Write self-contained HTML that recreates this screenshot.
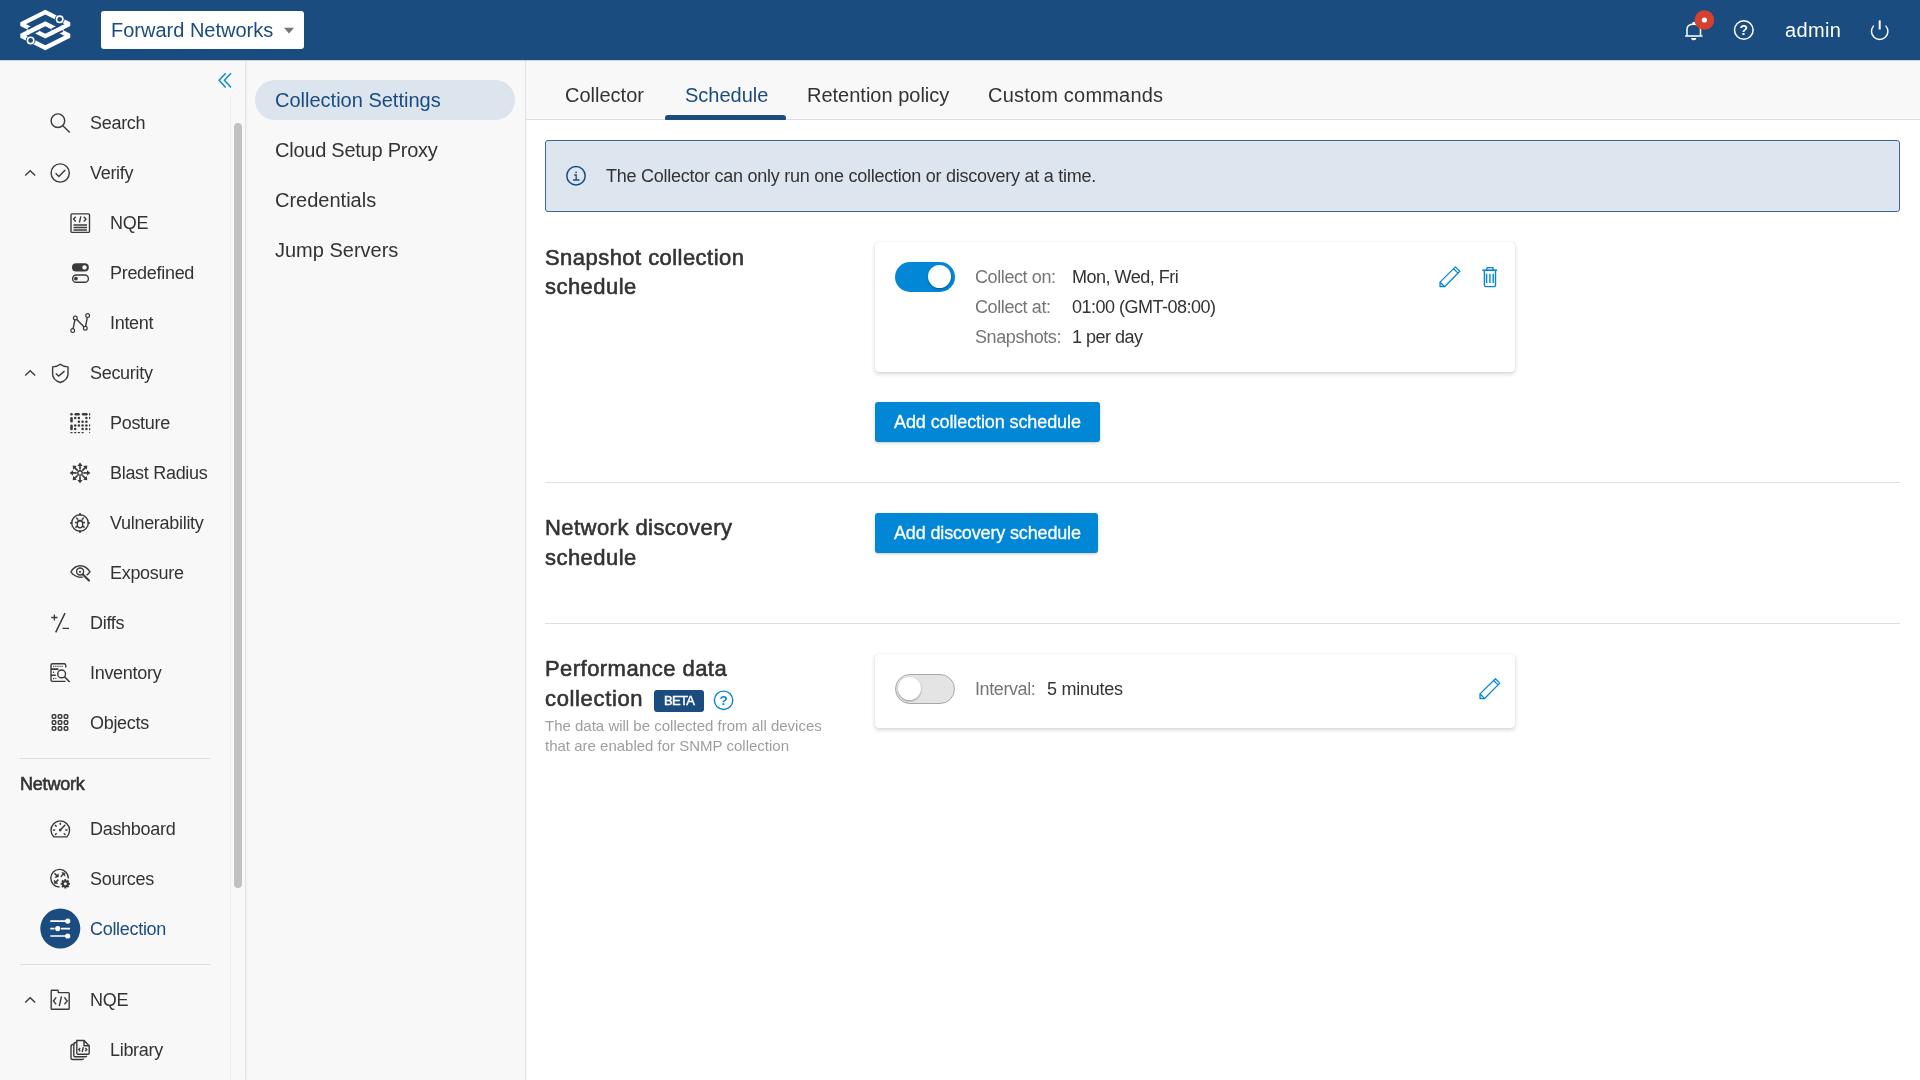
<!DOCTYPE html>
<html><head><meta charset="utf-8">
<style>
*{box-sizing:border-box;margin:0;padding:0}
html,body{width:1920px;height:1080px;overflow:hidden;background:#fff;font-family:"Liberation Sans",sans-serif;color:#333;-webkit-font-smoothing:antialiased}
.abs{position:absolute}
.t{position:absolute;white-space:nowrap;will-change:transform}
.svg{position:absolute;overflow:visible;will-change:transform}
.med{-webkit-text-stroke:0.35px currentColor}
</style></head><body>
<div class="abs" style="left:0;top:0;width:1920px;height:60px;background:#1a4c80"></div>
<svg class="svg" style="left:0;top:0" width="90" height="60" viewBox="0 0 90 60">
<g fill="none" stroke="#fff" stroke-width="4.4" stroke-linejoin="miter" stroke-miterlimit="1.6">
<path d="M45.3 12.1 L69.3 24.1 L45.3 36.1 L21.3 24.1 Z"/>
<path d="M45.3 23.7 L69.3 35.7 L45.3 47.7 L21.3 35.7 Z"/>
</g>
<g stroke-linecap="butt" fill="none"><path d="M29.22 31.74 L37.38 27.66" stroke="#1a4c80" stroke-width="8.2"/><path d="M27.30 32.70 L39.30 26.70" stroke="#fff" stroke-width="4.4"/><path d="M53.22 32.14 L61.38 28.06" stroke="#1a4c80" stroke-width="8.2"/><path d="M51.30 33.10 L63.30 27.10" stroke="#fff" stroke-width="4.4"/></g>
<circle cx="59.7" cy="19.3" r="4.9" fill="#1a4c80"/>
<circle cx="59.7" cy="19.3" r="3.2" fill="#1a4c80" stroke="#fff" stroke-width="1.6"/>
<circle cx="30.6" cy="40.4" r="4.9" fill="#1a4c80"/>
<circle cx="30.6" cy="40.4" r="3.2" fill="#1a4c80" stroke="#fff" stroke-width="1.6"/>
</svg>
<div class="abs" style="left:101px;top:11px;width:203px;height:38px;background:#fff;border-radius:3px"></div>
<div class="t" style="left:111px;top:17.07px;font-size:20px;line-height:26.00px;color:#1a4c80;font-weight:normal;letter-spacing:0px;">Forward Networks</div>
<svg class="svg" style="left:280px;top:24px" width="16" height="12"><path d="M4 3.8 L14 3.8 L9 9.6 Z" fill="#757575"/></svg>
<svg class="svg" style="left:1670px;top:5px" width="50" height="50" viewBox="1670 5 50 50">
<path d="M1685.2 36.1 H1702.5 M1687 36.1 V29.2 C1687 26 1689.8 24.3 1693.75 24.3 C1697.7 24.3 1700.5 26 1700.5 29.2 V36.1" fill="none" stroke="#fff" stroke-width="1.5"/>
<circle cx="1693.75" cy="23.2" r="1.5" fill="#fff"/>
<path d="M1691.2 37.9 A2.6 2.3 0 0 0 1696.4 37.9 Z" fill="#fff"/>
<circle cx="1704.4" cy="20" r="9.8" fill="#d7402f"/>
<circle cx="1704.4" cy="20" r="2.6" fill="#fff"/>
</svg>
<svg class="svg" style="left:1730px;top:16px" width="28" height="28" viewBox="1730 16 28 28">
<circle cx="1743.8" cy="30" r="9.3" fill="none" stroke="#fff" stroke-width="1.5"/>
<text x="1743.8" y="35.3" text-anchor="middle" font-family="Liberation Sans" font-weight="bold" font-size="14" fill="#fff">?</text>
</svg>
<div class="t" style="left:1784.5px;top:17.27px;font-size:20px;line-height:26.00px;color:#fff;font-weight:normal;letter-spacing:0.35px;">admin</div>
<svg class="svg" style="left:1865px;top:15px" width="30" height="30" viewBox="1865 15 30 30">
<path d="M1873.4 26.1 A8.2 8.2 0 1 0 1886.0 26.1" fill="none" stroke="#fff" stroke-width="1.4" stroke-linecap="round"/>
<path d="M1879.7 20.4 L1879.7 29.5" stroke="#fff" stroke-width="2" stroke-linecap="butt"/>
</svg>
<div class="abs" style="left:0;top:60px;width:526px;height:1020px;background:#f8f8f8"></div>
<div class="abs" style="left:0;top:60px;width:1920px;height:1px;background:#c9d3de"></div>
<div class="abs" style="left:230px;top:95px;width:1px;height:985px;background:#ececec"></div>
<div class="abs" style="left:234px;top:123px;width:8px;height:765px;background:#c1c1c1;border-radius:4px"></div>
<div class="abs" style="left:245px;top:61px;width:1px;height:1019px;background:#e2e2e2;box-shadow:1px 0 2px rgba(0,0,0,0.05)"></div>
<div class="abs" style="left:525px;top:61px;width:1px;height:1019px;background:#e0e0e0;box-shadow:1px 0 2px rgba(0,0,0,0.06)"></div>
<svg class="svg" style="left:210px;top:65px" width="30" height="30" viewBox="210 65 30 30"><path d="M225.7 73.2 L219.1 80.3 L225.7 87.4 M231 73.2 L224.4 80.3 L231 87.4" fill="none" stroke="#0286d6" stroke-width="1.4"/></svg>
<svg class="svg" style="left:45px;top:107px" width="30" height="30" viewBox="45 107 30 30"><circle cx="57.9" cy="120.7" r="6.8" fill="none" stroke="#3a3a3a" stroke-width="1.4"/><path d="M62.8 125.7 L69.8 132.4" fill="none" stroke="#3a3a3a" stroke-width="1.4" stroke-width="1.5"/></svg>
<div class="t" style="left:90px;top:111.96px;font-size:18px;line-height:23.40px;color:#333;font-weight:normal;letter-spacing:-0.3px;">Search</div>
<svg class="svg" style="left:20px;top:162px" width="20" height="20" viewBox="20 162 20 20"><path d="M25.2 175.6 L30.2 170.8 L35.2 175.6" fill="none" stroke="#3a3a3a" stroke-width="1.4"/></svg>
<svg class="svg" style="left:45px;top:158px" width="30" height="30" viewBox="45 158 30 30"><circle cx="60.2" cy="173" r="9.1" fill="none" stroke="#3a3a3a" stroke-width="1.4" stroke-width="1.5"/><path d="M55.6 173.2 L58.9 176.4 L65.2 170.1" fill="none" stroke="#3a3a3a" stroke-width="1.4" stroke-width="1.5"/></svg>
<div class="t" style="left:90px;top:161.96px;font-size:18px;line-height:23.40px;color:#333;font-weight:normal;letter-spacing:-0.3px;">Verify</div>
<svg class="svg" style="left:65px;top:207px" width="30" height="30" viewBox="65 207 30 30"><rect x="71" y="213.9" width="18.5" height="18.5" rx="1.2" fill="none" stroke="#3a3a3a" stroke-width="1.4" stroke-width="1.5"/><path d="M75.8 216.7 L73.6 219.1 L75.8 221.5 M79.4 222.6 L80.8 216.4 M83.8 216.7 L86 219.1 L83.8 221.5" fill="none" stroke="#3a3a3a" stroke-width="1.4" stroke-width="1.3"/><path d="M73.5 225 H87 M73.5 227.5 H87 M73.5 230 H87" fill="none" stroke="#3a3a3a" stroke-width="1.4" stroke-width="1.3"/></svg>
<div class="t" style="left:110px;top:211.96px;font-size:18px;line-height:23.40px;color:#333;font-weight:normal;letter-spacing:-0.3px;">NQE</div>
<svg class="svg" style="left:65px;top:257px" width="30" height="30" viewBox="65 257 30 30"><rect x="72" y="263.3" width="16.8" height="8.2" rx="4.1" fill="#3a3a3a"/><circle cx="84.5" cy="267.4" r="2.2" fill="#f8f8f8"/><rect x="72.6" y="275" width="15.8" height="7.3" rx="3.65" fill="none" stroke="#3a3a3a" stroke-width="1.4" stroke-width="1.3"/><circle cx="75.9" cy="278.6" r="1.9" fill="#3a3a3a"/></svg>
<div class="t" style="left:110px;top:261.96px;font-size:18px;line-height:23.40px;color:#333;font-weight:normal;letter-spacing:-0.3px;">Predefined</div>
<svg class="svg" style="left:65px;top:307px" width="30" height="30" viewBox="65 307 30 30"><path d="M72.7 330.6 L75.3 318 L85.3 328.2 L87.6 315.6" fill="none" stroke="#3a3a3a" stroke-width="1.4" stroke-width="1.3"/><circle cx="72.7" cy="330.6" r="1.9" fill="#f8f8f8" stroke="#3a3a3a" stroke-width="1.2"/><circle cx="75.3" cy="318" r="1.9" fill="#f8f8f8" stroke="#3a3a3a" stroke-width="1.2"/><circle cx="85.3" cy="328.2" r="1.9" fill="#f8f8f8" stroke="#3a3a3a" stroke-width="1.2"/><circle cx="87.6" cy="315.6" r="1.9" fill="#f8f8f8" stroke="#3a3a3a" stroke-width="1.2"/></svg>
<div class="t" style="left:110px;top:311.96px;font-size:18px;line-height:23.40px;color:#333;font-weight:normal;letter-spacing:-0.3px;">Intent</div>
<svg class="svg" style="left:20px;top:362px" width="20" height="20" viewBox="20 362 20 20"><path d="M25.2 375.6 L30.2 370.8 L35.2 375.6" fill="none" stroke="#3a3a3a" stroke-width="1.4"/></svg>
<svg class="svg" style="left:45px;top:357px" width="30" height="30" viewBox="45 357 30 30"><path d="M60.3 364.2 C58.2 366 55.8 366.8 52.6 366.9 L52.6 374 C52.6 378 56 381 60.3 382.5 C64.6 381 68 378 68 374 L68 366.9 C64.8 366.8 62.4 366 60.3 364.2 Z" fill="none" stroke="#3a3a3a" stroke-width="1.4" stroke-width="1.4" stroke-linejoin="round"/><path d="M55.8 373.4 L58.7 376.1 L64.5 371.1" fill="none" stroke="#3a3a3a" stroke-width="1.4" stroke-width="1.4"/></svg>
<div class="t" style="left:90px;top:361.96px;font-size:18px;line-height:23.40px;color:#333;font-weight:normal;letter-spacing:-0.3px;">Security</div>
<svg class="svg" style="left:65px;top:407px" width="30" height="30" viewBox="65 407 30 30"><g fill="#3a3a3a"><circle cx="71.5" cy="414.2" r="1.3"/><rect x="74.4" y="412.9" width="5.5" height="2.6" rx="1.3"/><rect x="81.8" y="412.9" width="5.9" height="2.6" rx="1.3"/><rect x="89" y="412.9" width="1.2" height="2.6" rx="0.6"/><rect x="70.2" y="417.1" width="2.6" height="5.5" rx="1.3"/><rect x="70.2" y="424.4" width="2.6" height="5.8" rx="1.3"/><circle cx="75.2" cy="417.9" r="1.25"/><circle cx="78.9" cy="417.9" r="1.25"/><circle cx="86.4" cy="417.9" r="1.25"/><circle cx="78.9" cy="421.7" r="1.25"/><circle cx="82.6" cy="421.7" r="1.25"/><circle cx="86.4" cy="421.7" r="1.25"/><circle cx="75.2" cy="425.4" r="1.25"/><circle cx="78.9" cy="425.4" r="1.25"/><circle cx="82.6" cy="425.4" r="1.25"/><circle cx="86.4" cy="425.4" r="1.25"/><circle cx="75.2" cy="429.1" r="1.25"/><circle cx="82.6" cy="429.1" r="1.25"/><circle cx="86.4" cy="429.1" r="1.25"/><rect x="89" y="416.7" width="1.2" height="2.4" rx="0.6"/><rect x="89" y="424.2" width="1.2" height="2.4" rx="0.6"/><rect x="89" y="427.90000000000003" width="1.2" height="2.4" rx="0.6"/><rect x="70.3" y="431.9" width="2.4" height="1.3" rx="0.6"/><rect x="74.0" y="431.9" width="2.4" height="1.3" rx="0.6"/><rect x="77.7" y="431.9" width="2.4" height="1.3" rx="0.6"/><rect x="81.39999999999999" y="431.9" width="2.4" height="1.3" rx="0.6"/><rect x="89" y="431.9" width="1.2" height="1.3" rx="0.6"/></g></svg>
<div class="t" style="left:110px;top:411.96px;font-size:18px;line-height:23.40px;color:#333;font-weight:normal;letter-spacing:-0.3px;">Posture</div>
<svg class="svg" style="left:65px;top:457px" width="30" height="30" viewBox="65 457 30 30"><circle cx="80" cy="472.9" r="2.2" fill="none" stroke="#3a3a3a" stroke-width="1.4" stroke-width="1.5"/><path d="M83.30 472.90 L89.20 472.90" stroke="#3a3a3a" stroke-width="1.7"/><path d="M90.30 472.90 L87.00 475.50 L87.00 470.30 Z" fill="#3a3a3a"/><path d="M82.33 475.23 L86.51 479.41" stroke="#3a3a3a" stroke-width="1.7"/><path d="M87.28 480.18 L83.11 479.69 L86.79 476.01 Z" fill="#3a3a3a"/><path d="M80.00 476.20 L80.00 482.10" stroke="#3a3a3a" stroke-width="1.7"/><path d="M80.00 483.20 L77.40 479.90 L82.60 479.90 Z" fill="#3a3a3a"/><path d="M77.67 475.23 L73.49 479.41" stroke="#3a3a3a" stroke-width="1.7"/><path d="M72.72 480.18 L73.21 476.01 L76.89 479.69 Z" fill="#3a3a3a"/><path d="M76.70 472.90 L70.80 472.90" stroke="#3a3a3a" stroke-width="1.7"/><path d="M69.70 472.90 L73.00 470.30 L73.00 475.50 Z" fill="#3a3a3a"/><path d="M77.67 470.57 L73.49 466.39" stroke="#3a3a3a" stroke-width="1.7"/><path d="M72.72 465.62 L76.89 466.11 L73.21 469.79 Z" fill="#3a3a3a"/><path d="M80.00 469.60 L80.00 463.70" stroke="#3a3a3a" stroke-width="1.7"/><path d="M80.00 462.60 L82.60 465.90 L77.40 465.90 Z" fill="#3a3a3a"/><path d="M82.33 470.57 L86.51 466.39" stroke="#3a3a3a" stroke-width="1.7"/><path d="M87.28 465.62 L86.79 469.79 L83.11 466.11 Z" fill="#3a3a3a"/></svg>
<div class="t" style="left:110px;top:461.96px;font-size:18px;line-height:23.40px;color:#333;font-weight:normal;letter-spacing:-0.3px;">Blast Radius</div>
<svg class="svg" style="left:65px;top:507px" width="30" height="30" viewBox="65 507 30 30"><circle cx="80" cy="523" r="8.3" fill="none" stroke="#3a3a3a" stroke-width="1.4" stroke-width="1.4"/><path d="M80 513 V515.5 M80 530.5 V533 M70 523 H72.5 M87.5 523 H90" stroke="#3a3a3a" stroke-width="1.6"/><ellipse cx="80" cy="524.3" rx="2.7" ry="3.5" fill="none" stroke="#3a3a3a" stroke-width="1.4" stroke-width="1.6"/><path d="M78 519.5 L76.2 517.8 M82 519.5 L83.8 517.8 M77.3 522.5 H75 M82.7 522.5 H85 M77.5 525.8 L75.5 527.6 M82.5 525.8 L84.5 527.6 M77.5 520.5 H82.5" stroke="#3a3a3a" stroke-width="1.5"/></svg>
<div class="t" style="left:110px;top:511.96px;font-size:18px;line-height:23.40px;color:#333;font-weight:normal;letter-spacing:-0.3px;">Vulnerability</div>
<svg class="svg" style="left:65px;top:557px" width="30" height="30" viewBox="65 557 30 30"><path d="M70.8 571.8 C73.5 567.6 76.8 565.7 80.3 565.7 C83.8 565.7 87.2 567.6 90 571.8 C89 573.2 87.9 574.3 86.6 575.2 M70.8 571.8 C73.5 575.5 77.5 577.4 82.6 577.3" fill="none" stroke="#3a3a3a" stroke-width="1.4" stroke-width="1.4"/><circle cx="80.1" cy="571.5" r="3.5" fill="#f8f8f8" stroke="#3a3a3a" stroke-width="1.4"/><circle cx="80" cy="571.8" r="1.1" fill="#3a3a3a"/><path d="M82.6 574.2 L89 580.4" stroke="#3a3a3a" stroke-width="2.1" stroke-linecap="round"/></svg>
<div class="t" style="left:110px;top:561.96px;font-size:18px;line-height:23.40px;color:#333;font-weight:normal;letter-spacing:-0.3px;">Exposure</div>
<svg class="svg" style="left:45px;top:607px" width="30" height="30" viewBox="45 607 30 30"><path d="M51.3 617.5 H57.5 M54.4 614.4 V620.6" stroke="#3a3a3a" stroke-width="1.3"/><path d="M65 613.2 L55.7 632.4" stroke="#3a3a3a" stroke-width="1.5"/><path d="M62.5 628.4 H69" stroke="#3a3a3a" stroke-width="1.3"/></svg>
<div class="t" style="left:90px;top:611.96px;font-size:18px;line-height:23.40px;color:#333;font-weight:normal;letter-spacing:-0.3px;">Diffs</div>
<svg class="svg" style="left:45px;top:657px" width="30" height="30" viewBox="45 657 30 30"><path d="M51 669 V665.3 Q51 663.8 52.5 663.8 H64.2 Q65.7 663.8 65.7 665.3 V667.4" fill="none" stroke="#3a3a3a" stroke-width="1.4" stroke-width="1.4"/><path d="M51 668.9 V680 Q51 681.4 52.4 681.4 H65.5" fill="none" stroke="#3a3a3a" stroke-width="1.4" stroke-width="1.4"/><path d="M51 669.1 H58.5 M51 675.2 H55.8" stroke="#3a3a3a" stroke-width="1.6"/><path d="M53.2 666.4 H63.6" stroke="#3a3a3a" stroke-width="1.1" stroke-dasharray="1.1 1.0"/><circle cx="53.6" cy="672.3" r="0.75" fill="#3a3a3a"/><circle cx="53.6" cy="678.4" r="0.75" fill="#3a3a3a"/><circle cx="55.8" cy="678.4" r="0.6" fill="#3a3a3a"/><circle cx="61.6" cy="673.9" r="3.9" fill="none" stroke="#3a3a3a" stroke-width="1.4"/><path d="M64.6 676.9 L69.7 682" stroke="#3a3a3a" stroke-width="1.5"/></svg>
<div class="t" style="left:90px;top:661.96px;font-size:18px;line-height:23.40px;color:#333;font-weight:normal;letter-spacing:-0.3px;">Inventory</div>
<svg class="svg" style="left:45px;top:707px" width="30" height="30" viewBox="45 707 30 30"><rect x="52.2" y="714.7" width="3.6" height="3.6" rx="1" fill="none" stroke="#3a3a3a" stroke-width="1.4" stroke-width="1.3"/><rect x="52.2" y="720.7" width="3.6" height="3.6" rx="1" fill="none" stroke="#3a3a3a" stroke-width="1.4" stroke-width="1.3"/><rect x="52.2" y="726.7" width="3.6" height="3.6" rx="1" fill="none" stroke="#3a3a3a" stroke-width="1.4" stroke-width="1.3"/><rect x="58.2" y="714.7" width="3.6" height="3.6" rx="1" fill="none" stroke="#3a3a3a" stroke-width="1.4" stroke-width="1.3"/><rect x="58.2" y="720.7" width="3.6" height="3.6" rx="1" fill="none" stroke="#3a3a3a" stroke-width="1.4" stroke-width="1.3"/><rect x="58.2" y="726.7" width="3.6" height="3.6" rx="1" fill="none" stroke="#3a3a3a" stroke-width="1.4" stroke-width="1.3"/><rect x="64.2" y="714.7" width="3.6" height="3.6" rx="1" fill="none" stroke="#3a3a3a" stroke-width="1.4" stroke-width="1.3"/><rect x="64.2" y="720.7" width="3.6" height="3.6" rx="1" fill="none" stroke="#3a3a3a" stroke-width="1.4" stroke-width="1.3"/><rect x="64.2" y="726.7" width="3.6" height="3.6" rx="1" fill="none" stroke="#3a3a3a" stroke-width="1.4" stroke-width="1.3"/></svg>
<div class="t" style="left:90px;top:711.96px;font-size:18px;line-height:23.40px;color:#333;font-weight:normal;letter-spacing:-0.3px;">Objects</div>
<div class="abs" style="left:20px;top:758px;width:190px;height:1px;background:#dedede"></div>
<div class="t" style="left:20px;top:773.06px;font-size:18px;line-height:23.40px;color:#333;font-weight:normal;letter-spacing:-0.2px;-webkit-text-stroke:0.6px #333">Network</div>
<svg class="svg" style="left:45px;top:813px" width="30" height="30" viewBox="45 813 30 30"><path d="M53.85 836.9 A9.3 9.3 0 1 1 66.75 836.9 Z" fill="none" stroke="#3a3a3a" stroke-width="1.4" stroke-width="1.4" stroke-linejoin="round"/><path d="M60.2 830.1 L64.9 825.3" stroke="#3a3a3a" stroke-width="1.5" stroke-linecap="round"/><circle cx="60.2" cy="830.1" r="1.3" fill="#3a3a3a"/><path d="M60.29 824.35 L60.31 823.25" stroke="#3a3a3a" stroke-width="1.5" stroke-linecap="round"/><path d="M56.19 826.18 L55.41 825.42" stroke="#3a3a3a" stroke-width="1.5" stroke-linecap="round"/><path d="M54.55 830.10 L53.45 830.10" stroke="#3a3a3a" stroke-width="1.5" stroke-linecap="round"/><path d="M65.85 830.10 L66.95 830.10" stroke="#3a3a3a" stroke-width="1.5" stroke-linecap="round"/><path d="M56.21 833.73 L55.39 834.47" stroke="#3a3a3a" stroke-width="1.5" stroke-linecap="round"/><path d="M64.19 833.73 L65.01 834.47" stroke="#3a3a3a" stroke-width="1.5" stroke-linecap="round"/></svg>
<div class="t" style="left:90px;top:817.96px;font-size:18px;line-height:23.40px;color:#333;font-weight:normal;letter-spacing:-0.3px;">Dashboard</div>
<svg class="svg" style="left:45px;top:863px" width="30" height="30" viewBox="45 863 30 30"><path d="M68.4 878.5 A8.8 8.8 0 1 0 59.6 887" fill="none" stroke="#3a3a3a" stroke-width="1.4" stroke-width="1.5"/><path d="M54.4 873.3 L57.4 876.2 M60.8 876.8 L63.8 873.6 M58.4 879.6 L55.2 882.8" stroke="#3a3a3a" stroke-width="1.5" fill="none"/><path d="M58.4 876.9 L55 877.5 L58.2 873.8 Z M64.8 873 L64.9 876.2 L61.8 872.6 Z M54.4 883.6 L54.2 880 L57.8 883.4 Z" fill="#3a3a3a" stroke="#3a3a3a" stroke-width="0.6" stroke-linejoin="round"/><path d="M67.80 883.80 L70.00 883.80" stroke="#3a3a3a" stroke-width="1.9"/><path d="M67.07 885.57 L68.62 887.12" stroke="#3a3a3a" stroke-width="1.9"/><path d="M65.30 886.30 L65.30 888.50" stroke="#3a3a3a" stroke-width="1.9"/><path d="M63.53 885.57 L61.98 887.12" stroke="#3a3a3a" stroke-width="1.9"/><path d="M62.80 883.80 L60.60 883.80" stroke="#3a3a3a" stroke-width="1.9"/><path d="M63.53 882.03 L61.98 880.48" stroke="#3a3a3a" stroke-width="1.9"/><path d="M65.30 881.30 L65.30 879.10" stroke="#3a3a3a" stroke-width="1.9"/><path d="M67.07 882.03 L68.62 880.48" stroke="#3a3a3a" stroke-width="1.9"/><circle cx="65.3" cy="883.8" r="3.6" fill="#3a3a3a"/><circle cx="65.3" cy="883.8" r="1.5" fill="#f8f8f8"/></svg>
<div class="t" style="left:90px;top:867.96px;font-size:18px;line-height:23.40px;color:#333;font-weight:normal;letter-spacing:-0.3px;">Sources</div>
<svg class="svg" style="left:38px;top:906px" width="46" height="46" viewBox="38 906 46 46"><circle cx="60.3" cy="928.6" r="20" fill="#1a4c80"/><path d="M50.3 921.1 H67 M50.3 928.6 H54.5 M61 928.6 H70 M50.3 936 H67" stroke="#fff" stroke-width="1.6"/><circle cx="67.7" cy="921.1" r="2.6" fill="#fff"/><circle cx="57.7" cy="928.6" r="2.6" fill="#fff"/><circle cx="67.7" cy="936" r="2.6" fill="#fff"/></svg>
<div class="t" style="left:90px;top:917.96px;font-size:18px;line-height:23.40px;color:#1a4c80;font-weight:normal;letter-spacing:-0.3px;">Collection</div>
<div class="abs" style="left:20px;top:964px;width:190px;height:1px;background:#dedede"></div>
<svg class="svg" style="left:20px;top:989px" width="20" height="20" viewBox="20 989 20 20"><path d="M25.2 1002.6 L30.2 997.8 L35.2 1002.6" fill="none" stroke="#3a3a3a" stroke-width="1.4"/></svg>
<svg class="svg" style="left:45px;top:985px" width="30" height="30" viewBox="45 985 30 30"><path d="M51.2 1008.5 V991 Q51.2 990.3 52 990.3 H57.5 Q58.3 990.3 58.3 991.2 V992.6 H68.4 Q69.2 992.6 69.2 993.4 V1008.5 Q69.2 1009.3 68.4 1009.3 H52 Q51.2 1009.3 51.2 1008.5 Z" fill="none" stroke="#3a3a3a" stroke-width="1.4" stroke-width="1.4"/><path d="M56.2 997.4 L53.4 1001 L56.2 1004.4 M64.4 997.4 L67.2 1001 L64.4 1004.4 M61.5 996.4 L59.3 1006" fill="none" stroke="#3a3a3a" stroke-width="1.4" stroke-width="1.4"/></svg>
<div class="t" style="left:90px;top:988.96px;font-size:18px;line-height:23.40px;color:#333;font-weight:normal;letter-spacing:-0.3px;">NQE</div>
<svg class="svg" style="left:65px;top:1035px" width="30" height="30" viewBox="65 1035 30 30"><path d="M73.8 1044.2 Q71 1044.2 71 1046.8 V1058 Q71 1059.5 72.5 1059.5 H82 Q83.2 1059.5 83.8 1058.5" fill="none" stroke="#3a3a3a" stroke-width="1.4" stroke-width="1.3"/><path d="M76.8 1042.2 Q73.8 1042.2 73.8 1044.9 V1055.5 Q73.8 1056.8 75 1056.8 H85 Q86.2 1056.8 86.8 1055.8" fill="none" stroke="#3a3a3a" stroke-width="1.4" stroke-width="1.3"/><path d="M76.8 1040.5 H84 L89.2 1045.8 V1053 Q89.2 1054.3 88 1054.3 H78 Q76.8 1054.3 76.8 1053 Z M84 1040.5 V1045.8 H89.2" fill="none" stroke="#3a3a3a" stroke-width="1.4" stroke-width="1.3"/><path d="M80.2 1048 L78.8 1049.6 L80.2 1051.2 M85.4 1048 L86.8 1049.6 L85.4 1051.2 M83.3 1047.2 L82.2 1052" fill="none" stroke="#3a3a3a" stroke-width="1.4" stroke-width="1"/></svg>
<div class="t" style="left:110px;top:1038.96px;font-size:18px;line-height:23.40px;color:#333;font-weight:normal;letter-spacing:-0.3px;">Library</div>
<div class="abs" style="left:255px;top:80px;width:260px;height:40px;background:#dce4ee;border-radius:20px"></div>
<div class="t" style="left:275px;top:86.57px;font-size:20px;line-height:26.00px;color:#1a4c80;font-weight:normal;letter-spacing:0px;">Collection Settings</div>
<div class="t" style="left:275px;top:136.57px;font-size:20px;line-height:26.00px;color:#333;font-weight:normal;letter-spacing:-0.25px;">Cloud Setup Proxy</div>
<div class="t" style="left:275px;top:186.57px;font-size:20px;line-height:26.00px;color:#333;font-weight:normal;letter-spacing:0px;">Credentials</div>
<div class="t" style="left:275px;top:236.57px;font-size:20px;line-height:26.00px;color:#333;font-weight:normal;letter-spacing:0px;">Jump Servers</div>
<div class="abs" style="left:526px;top:61px;width:1394px;height:59px;background:#f8f8f8;border-bottom:1px solid #dcdcdc"></div>
<div class="t" style="left:565px;top:81.67px;font-size:20px;line-height:26.00px;color:#333;font-weight:normal;letter-spacing:0px;">Collector</div>
<div class="t" style="left:685px;top:81.67px;font-size:20px;line-height:26.00px;color:#1a4c80;font-weight:normal;letter-spacing:0px;">Schedule</div>
<div class="t" style="left:807px;top:81.67px;font-size:20px;line-height:26.00px;color:#333;font-weight:normal;letter-spacing:0px;">Retention policy</div>
<div class="t" style="left:988px;top:81.67px;font-size:20px;line-height:26.00px;color:#333;font-weight:normal;letter-spacing:0.2px;">Custom commands</div>
<div class="abs" style="left:665px;top:115px;width:121px;height:5px;background:#1a4c80;border-radius:3px 3px 1px 1px"></div>
<div class="abs" style="left:545px;top:140px;width:1355px;height:72px;background:#dde5ef;border:1px solid #3a6699;border-radius:3px"></div>
<svg class="svg" style="left:560px;top:160px" width="32" height="32" viewBox="560 160 32 32"><circle cx="576" cy="175.8" r="9.2" fill="none" stroke="#1a4c80" stroke-width="1.5"/><circle cx="576.1" cy="172.3" r="0.9" fill="#1a4c80"/><path d="M574.2 175 H576.2 V179.5 M573 180 H579.5" fill="none" stroke="#1a4c80" stroke-width="1.3"/></svg>
<div class="t" style="left:606px;top:164.76px;font-size:18px;line-height:23.40px;color:#333;font-weight:normal;letter-spacing:-0.25px;">The Collector can only run one collection or discovery at a time.</div>
<div class="t" style="left:545px;top:243.68px;font-size:22px;line-height:28.60px;color:#333;font-weight:normal;letter-spacing:0.45px;-webkit-text-stroke:0.6px #333">Snapshot collection</div>
<div class="t" style="left:545px;top:273.48px;font-size:22px;line-height:28.60px;color:#333;font-weight:normal;letter-spacing:0.45px;-webkit-text-stroke:0.6px #333">schedule</div>
<div class="abs" style="left:875px;top:242px;width:640px;height:130px;background:#fff;border-radius:4px;box-shadow:0 2px 4px rgba(0,0,0,0.16),0 0 1px rgba(0,0,0,0.16)"></div>
<div class="abs" style="left:895px;top:262px;width:60px;height:30px;background:#0286d6;border-radius:15px"></div>
<div class="abs" style="left:928px;top:265px;width:23.4px;height:23.4px;background:#fff;border-radius:50%;box-shadow:0 1px 2px rgba(0,0,0,0.35)"></div>
<div class="t" style="left:975px;top:265.86px;font-size:18px;line-height:23.40px;color:#757575;font-weight:normal;letter-spacing:-0.4px;">Collect on:</div>
<div class="t" style="left:1072px;top:265.86px;font-size:18px;line-height:23.40px;color:#333;font-weight:normal;letter-spacing:-0.5px;">Mon, Wed, Fri</div>
<div class="t" style="left:975px;top:295.86px;font-size:18px;line-height:23.40px;color:#757575;font-weight:normal;letter-spacing:-0.4px;">Collect at:</div>
<div class="t" style="left:1072px;top:295.86px;font-size:18px;line-height:23.40px;color:#333;font-weight:normal;letter-spacing:-0.5px;">01:00 (GMT-08:00)</div>
<div class="t" style="left:975px;top:325.86px;font-size:18px;line-height:23.40px;color:#757575;font-weight:normal;letter-spacing:-0.4px;">Snapshots:</div>
<div class="t" style="left:1072px;top:325.86px;font-size:18px;line-height:23.40px;color:#333;font-weight:normal;letter-spacing:-0.5px;">1 per day</div>
<svg class="svg" style="left:1430px;top:260px" width="40" height="40" viewBox="1430 260 40 40"><path d="M1440 286.7 L1440 282.09999999999997 L1455.4 266.9 L1459.8 271.3 L1444.6 286.7 Z M1440.4 282.5 L1444.2 286.3 M1453.6 268.7 L1458 273.09999999999997" fill="none" stroke="#0286d6" stroke-width="1.25" stroke-linejoin="round"/><path d="M1440.2 286.5 L1440.2 283.5 L1443.2 286.5 Z" fill="#0286d6" opacity="0.35"/></svg>
<svg class="svg" style="left:1475px;top:260px" width="30" height="32" viewBox="1475 260 30 32"><path d="M1482.3 270.2 H1497" stroke="#0286d6" stroke-width="1.6"/><path d="M1486.5 270 L1487.3 267.6 H1492.7 L1493.5 270" fill="none" stroke="#0286d6" stroke-width="1.4"/><path d="M1484.4 270.5 V285.3 Q1484.4 286.6 1485.7 286.6 H1494.2 Q1495.5 286.6 1495.5 285.3 V270.5" fill="none" stroke="#0286d6" stroke-width="1.4"/><path d="M1486.6 273.8 V283 M1489.9 273.8 V283 M1493.2 273.8 V283" stroke="#0286d6" stroke-width="1.4"/></svg>
<div class="abs" style="left:875px;top:402px;width:225px;height:40px;background:#0286d6;border-radius:3px;box-shadow:0 1px 3px rgba(0,0,0,0.22)"></div>
<div class="t" style="left:894px;top:410.56px;font-size:18px;line-height:23.40px;color:#fff;font-weight:normal;letter-spacing:-0.1px;-webkit-text-stroke:0.3px #fff">Add collection schedule</div>
<div class="abs" style="left:545px;top:482px;width:1355px;height:1px;background:#e0e0e0"></div>
<div class="t" style="left:545px;top:514.08px;font-size:22px;line-height:28.60px;color:#333;font-weight:normal;letter-spacing:0.45px;-webkit-text-stroke:0.6px #333">Network discovery</div>
<div class="t" style="left:545px;top:544.08px;font-size:22px;line-height:28.60px;color:#333;font-weight:normal;letter-spacing:0.45px;-webkit-text-stroke:0.6px #333">schedule</div>
<div class="abs" style="left:875px;top:513px;width:223px;height:40px;background:#0286d6;border-radius:3px;box-shadow:0 1px 3px rgba(0,0,0,0.22)"></div>
<div class="t" style="left:894px;top:521.56px;font-size:18px;line-height:23.40px;color:#fff;font-weight:normal;letter-spacing:-0.15px;-webkit-text-stroke:0.3px #fff">Add discovery schedule</div>
<div class="abs" style="left:545px;top:623px;width:1355px;height:1px;background:#e0e0e0"></div>
<div class="t" style="left:545px;top:654.88px;font-size:22px;line-height:28.60px;color:#333;font-weight:normal;letter-spacing:0.45px;-webkit-text-stroke:0.6px #333">Performance data</div>
<div class="t" style="left:545px;top:684.58px;font-size:22px;line-height:28.60px;color:#333;font-weight:normal;letter-spacing:0.65px;-webkit-text-stroke:0.6px #333">collection</div>
<div class="abs" style="left:654px;top:689.5px;width:49.5px;height:22px;background:#1a4c80;border-radius:3px"></div>
<div class="t" style="left:664px;top:693.35px;font-size:13px;line-height:16.90px;color:#fff;font-weight:normal;letter-spacing:-0.7px;-webkit-text-stroke:0.45px #fff">BETA</div>
<svg class="svg" style="left:710px;top:687px" width="28" height="28" viewBox="710 687 28 28"><circle cx="723.6" cy="700.3" r="9.2" fill="none" stroke="#0286d6" stroke-width="1.4"/><text x="723.6" y="705.2" text-anchor="middle" font-family="Liberation Sans" font-weight="bold" font-size="13.5" fill="#0286d6">?</text></svg>
<div class="t" style="left:545px;top:716.05px;font-size:15px;line-height:19.50px;color:#9e9e9e;font-weight:normal;letter-spacing:0px;">The data will be collected from all devices</div>
<div class="t" style="left:545px;top:736.05px;font-size:15px;line-height:19.50px;color:#9e9e9e;font-weight:normal;letter-spacing:0px;">that are enabled for SNMP collection</div>
<div class="abs" style="left:875px;top:654px;width:640px;height:74px;background:#fff;border-radius:4px;box-shadow:0 2px 4px rgba(0,0,0,0.16),0 0 1px rgba(0,0,0,0.16)"></div>
<div class="abs" style="left:895px;top:674px;width:60px;height:30px;background:#e4e4e4;border:1px solid #a8a8a8;border-radius:15px"></div>
<div class="abs" style="left:898px;top:676.7px;width:23.4px;height:23.4px;background:#fff;border-radius:50%;box-shadow:0 1px 2px rgba(0,0,0,0.35)"></div>
<div class="t" style="left:975px;top:677.76px;font-size:18px;line-height:23.40px;color:#757575;font-weight:normal;letter-spacing:-0.4px;">Interval:</div>
<div class="t" style="left:1047px;top:677.76px;font-size:18px;line-height:23.40px;color:#333;font-weight:normal;letter-spacing:-0.25px;">5 minutes</div>
<svg class="svg" style="left:1470px;top:672px" width="40" height="40" viewBox="1470 672 40 40"><path d="M1480 698.5 L1480 693.9 L1495.4 678.7 L1499.8 683.1 L1484.6 698.5 Z M1480.4 694.3 L1484.2 698.1 M1493.6 680.5 L1498 684.9" fill="none" stroke="#0286d6" stroke-width="1.25" stroke-linejoin="round"/><path d="M1480.2 698.3 L1480.2 695.3 L1483.2 698.3 Z" fill="#0286d6" opacity="0.35"/></svg>
</body></html>
